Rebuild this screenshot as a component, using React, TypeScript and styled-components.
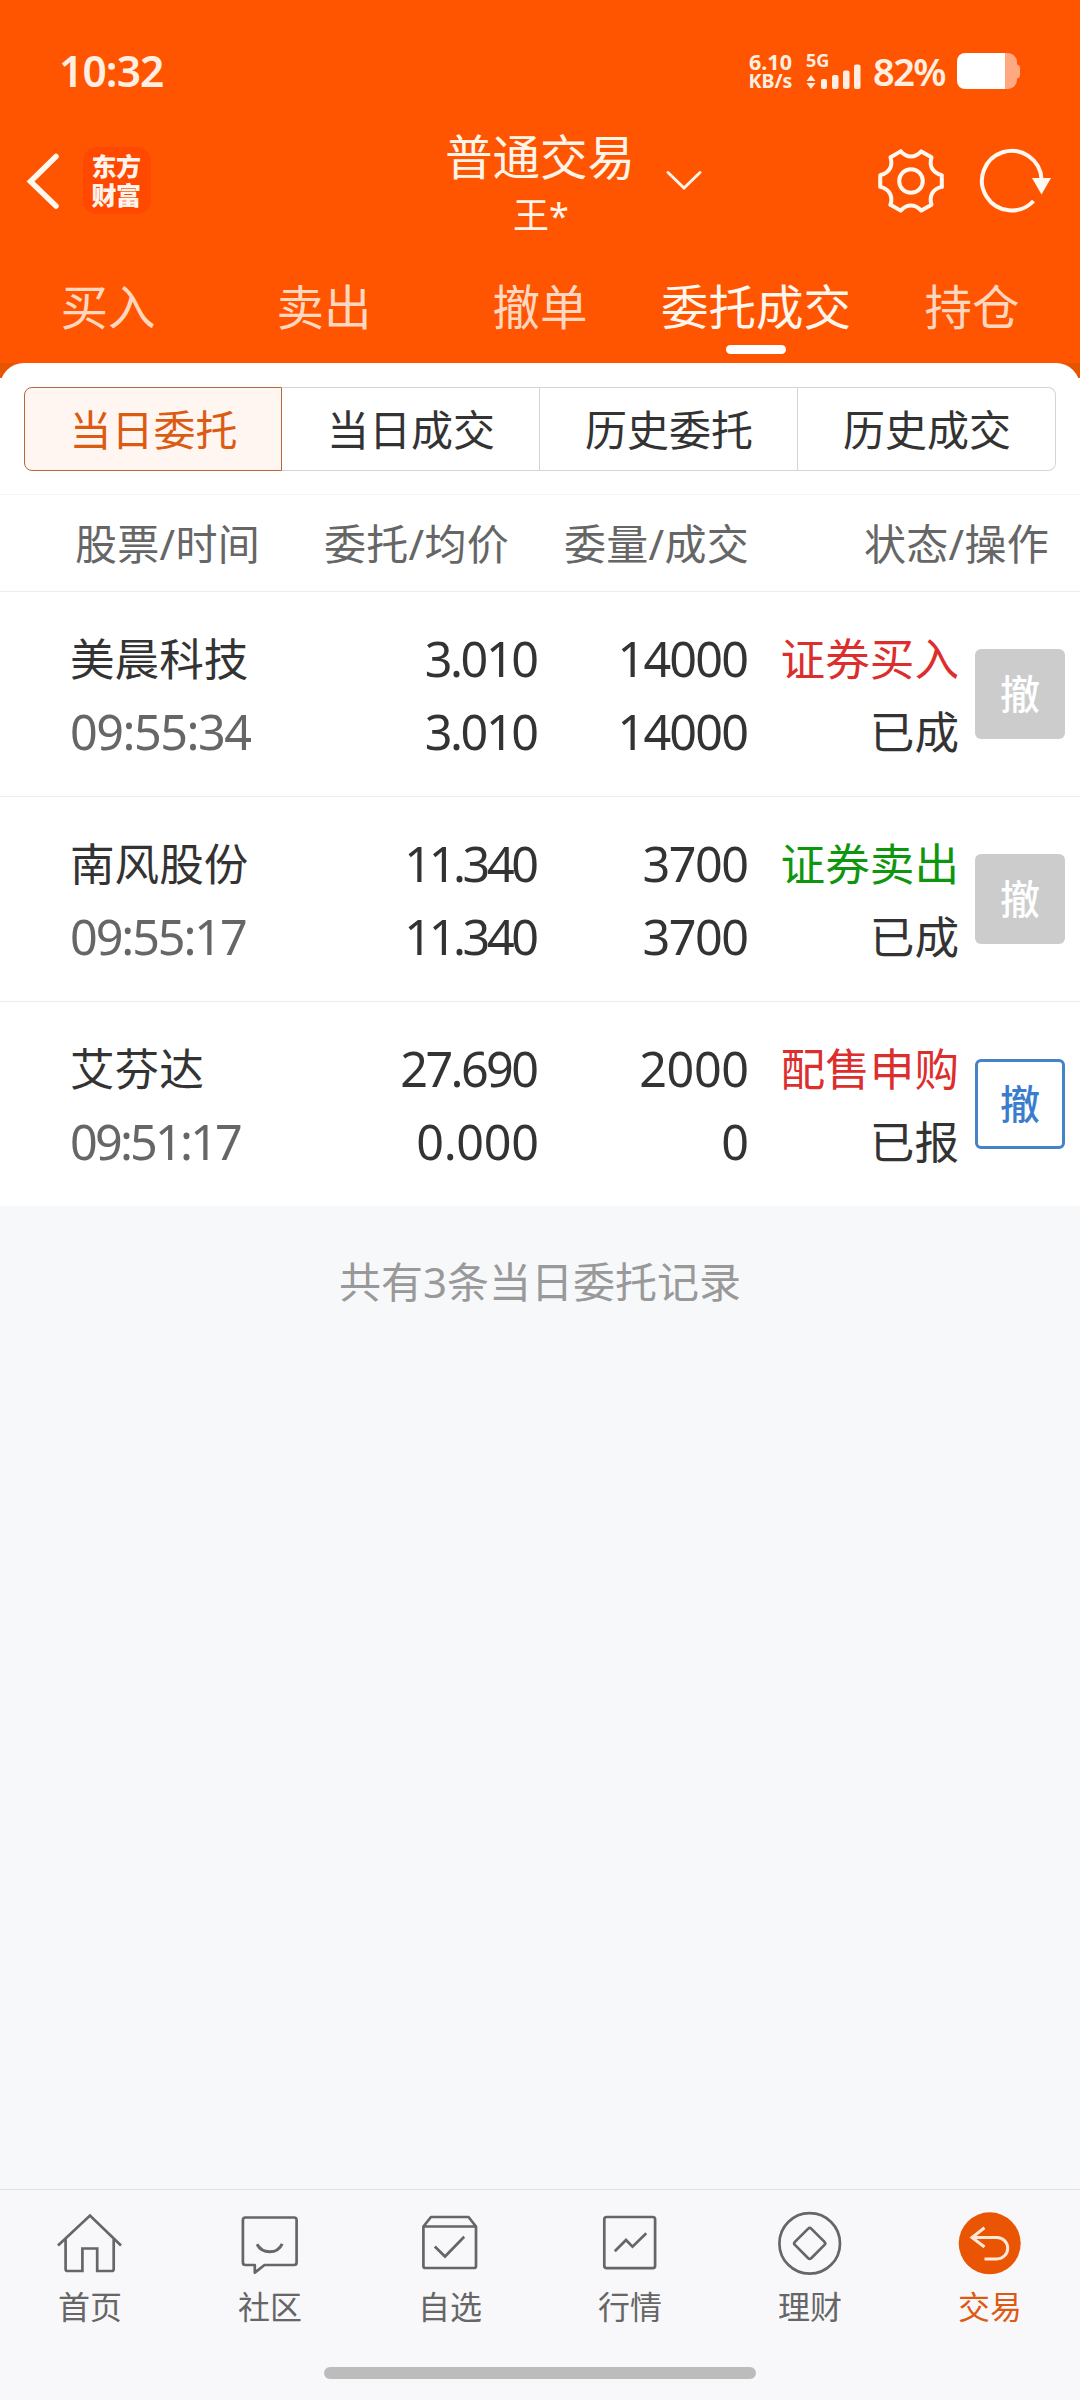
import React from "react";
import styled, { createGlobalStyle } from "styled-components";

const GlobalStyle = createGlobalStyle`
  * { box-sizing: border-box; }
  body {
    margin: 0;
    background: #f7f8fa;
    font-family: "Noto Sans", "Noto Sans CJK SC", sans-serif;
    color: #333;
  }
`;

const Screen = styled.div`
  width: 1080px;
  height: 2400px;
  display: flex;
  flex-direction: column;
  background: #f7f8fa;
  overflow: hidden;
`;

const Header = styled.header`
  height: 363px;
  flex: none;
  background: #ff5500;
  color: #fff4e9;
`;

const StatusBar = styled.div`
  height: 118px;
  padding: 22px 60px 0 59px;
  display: flex;
  justify-content: space-between;
  align-items: flex-start;
  color: #ffeee2;
`;

const Clock = styled.div`
  font-size: 42.5px;
  font-weight: 600;
  line-height: 97px;
  letter-spacing: -0.9px;
`;

const StatusRight = styled.div`
  display: flex;
  height: 98px;
  align-items: center;
`;

const NetSpeed = styled.div`
  width: 47px;
  margin-right: 12px;
  text-align: center;
  font-weight: 700;
  font-size: 19.5px;
  line-height: 20px;
  white-space: nowrap;
`;

const SpeedValue = styled.div`
  font-size: 21.5px;
  line-height: 19px;
`;

const Signal = styled.div`
  width: 58px;
  height: 36px;
  margin-right: 9px;
  display: flex;
  flex-direction: column;
  justify-content: space-between;
  position: relative;
`;

const NetType = styled.span`
  font-size: 18px;
  font-weight: 700;
  line-height: 14px;
`;

const SignalArt = styled.svg`
  position: absolute;
  left: 0;
  top: 0;
`;

const BatteryText = styled.div`
  font-size: 38px;
  font-weight: 600;
  width: 84px;
  letter-spacing: -1.6px;
  line-height: 96px;
`;

const TitleBar = styled.div`
  height: 132px;
  display: grid;
  grid-template-columns: 1fr 260px 1fr;
`;

const TitleLeft = styled.div`
  display: flex;
  align-items: flex-start;
  padding: 29px 0 0 26px;
`;

const Logo = styled.div`
  width: 68px;
  height: 67px;
  margin-left: 22px;
  border-radius: 14px;
  background: #ff4800;
  color: #fff4ec;
  font-family: "Noto Sans CJK SC", sans-serif;
  font-size: 25px;
  font-weight: 900;
  line-height: 29px;
  padding: 4px 2px 0 0;
  text-align: center;
  letter-spacing: -0.5px;
`;

const TitleCenter = styled.div`
  text-align: center;
`;

const Title = styled.div`
  font-size: 47.5px;
  line-height: 60px;
  margin-top: 9px;
`;

const Account = styled.div`
  font-size: 36px;
  line-height: 44px;
  margin-top: 7px;
  padding-left: 2px;
`;

const TitleRight = styled.div`
  display: flex;
  padding: 24px 25px 0 0;
`;

const ArrowDown = styled.svg`
  margin: 26px auto 0 -6px;
`;

const Tabs = styled.nav`
  height: 113px;
  display: grid;
  grid-template-columns: repeat(5, 216px);
`;

const Tab = styled.div<{ $active?: boolean }>`
  display: flex;
  flex-direction: column;
  align-items: center;
  font-size: 47.5px;
  line-height: 70px;
  padding-top: 22px;
  color: ${(p) => (p.$active ? "#fff6ee" : "#ffd6bf")};

  &::after {
    content: "";
    width: 60px;
    height: 9px;
    margin-top: 3px;
    border-radius: 5px;
    background: ${(p) => (p.$active ? "#fff" : "transparent")};
  }
`;

const SheetBack = styled.div`
  flex: none;
  background: linear-gradient(#e65400 0 15px, #fff 15px);
`;

const Sheet = styled.main`
  background: #fff;
  border-radius: 24px 24px 0 0;
  padding-top: 24px;
`;

const Segments = styled.div`
  display: grid;
  grid-template-columns: repeat(4, 258px);
  padding: 0 24px 23px;
  border-bottom: 1px solid #f4f4f4;
`;

const Segment = styled.div<{ $active?: boolean }>`
  height: 84px;
  line-height: 84px;
  padding-left: 1px;
  text-align: center;
  font-size: 42px;
  color: ${(p) => (p.$active ? "#dc5b12" : "#333")};
  background: ${(p) => (p.$active ? "#fff6f2" : "#fff")};
  border: 1px solid ${(p) => (p.$active ? "#b5683c" : "#d4d4d4")};
  &:not(:first-child) { border-left-width: 0; }
  &:first-child { border-radius: 8px 0 0 8px; }
  &:last-child { border-radius: 0 8px 8px 0; }
`;

const TableHead = styled.div`
  height: 97px;
  display: grid;
  grid-template-columns: 260px 249px 240px 1fr;
  padding-right: 31px;
  border-bottom: 1px solid #ececec;
  font-size: 42px;
  line-height: 97px;
  letter-spacing: 0.3px;
  text-align: right;
  color: #666;
  white-space: nowrap;
`;

const Row = styled.div`
  height: 205px;
  display: grid;
  grid-template-columns: 259px 281px 210px 209px 1fr;
  border-bottom: 1px solid #ececec;
  &:last-child { height: 204px; border-bottom: 0; }
`;

const Cell = styled.div<{ $left?: boolean }>`
  padding: ${(p) => (p.$left ? "30px 0 0 70px" : "30px 0 0")};
  text-align: ${(p) => (p.$left ? "left" : "right")};
  white-space: nowrap;
`;

const Line = styled.div<{ $color?: string }>`
  font-size: 44.6px;
  line-height: 73px;
  color: ${(p) => p.$color ?? "#333"};
`;

/* The padding takes back the tracking that trails the last digit. */
const NumLine = styled(Line)<{ $spacing: number }>`
  font-size: 48.5px;
  letter-spacing: ${(p) => p.$spacing}px;
  padding-right: ${(p) => 1 - p.$spacing}px;
`;

const CancelButton = styled.button<{ $enabled?: boolean }>`
  width: 90px;
  height: 90px;
  margin: 57px 0 0 16px;
  padding: 0;
  border-radius: 6px;
  border: ${(p) => (p.$enabled ? "3px solid #4583c8" : "0")};
  background: ${(p) => (p.$enabled ? "#fff" : "#ccc")};
  color: ${(p) => (p.$enabled ? "#3a7dcc" : "#fff")};
  font-family: inherit;
  font-size: 40px;
  font-weight: 500;
  line-height: 84px;
`;

const Summary = styled.div`
  flex: 1;
  padding-top: 46px;
  text-align: center;
  font-size: 42px;
  line-height: 60px;
  color: #999;
`;

const BottomNav = styled.nav`
  height: 211px;
  flex: none;
  background: #f8f8fa;
  border-top: 1px solid #dfe2e5;
`;

const NavItems = styled.div`
  display: grid;
  grid-template-columns: repeat(6, 180px);
  height: 177px;
`;

const NavItem = styled.div<{ $active?: boolean }>`
  display: flex;
  flex-direction: column;
  align-items: center;
  padding-top: 18px;
  font-size: 32px;
  line-height: 48px;
  color: ${(p) => (p.$active ? "#dd5a14" : "#666")};

  svg {
    display: block;
    margin-bottom: 3px;
  }
`;

const HomeBar = styled.div`
  width: 432px;
  height: 12px;
  margin: 0 auto;
  border-radius: 6px;
  background: #bcbcbc;
`;

const tracking: Record<string, number> = {
  "3.010": -2.4,
  "11.340": -3.4,
  "27.690": -2.6,
  "0.000": -0.3,
  "14000": -1.8,
  "3700": -1.5,
  "2000": -0.4,
  "09:55:34": -1.5,
  "09:55:17": -2.1,
  "09:51:17": -2.8,
};

const Num = ({ value, color }: { value: string; color?: string }) => (
  <NumLine $color={color} $spacing={tracking[value] ?? 0}>
    {value}
  </NumLine>
);

const orders = [
  { name: "美晨科技", time: "09:55:34", price: "3.010", avg: "3.010", qty: "14000", done: "14000", side: "证券买入", color: "#dc2e2c", state: "已成", open: false },
  { name: "南风股份", time: "09:55:17", price: "11.340", avg: "11.340", qty: "3700", done: "3700", side: "证券卖出", color: "#0f960f", state: "已成", open: false },
  { name: "艾芬达", time: "09:51:17", price: "27.690", avg: "0.000", qty: "2000", done: "0", side: "配售申购", color: "#dc2e2c", state: "已报", open: true },
];

const NavIcon = ({ children }: { children: React.ReactNode }) => (
  <svg width="72" height="72" viewBox="0 0 72 72" fill="none" stroke="#666" strokeWidth="2.7" strokeLinejoin="round">
    {children}
  </svg>
);

const navItems = [
  { label: "首页", icon: <NavIcon><path d="M4 37.5 36 7.5 67 37.5M11.6 31V61Q11.6 63 13.6 63H28.4V40.5H43.2V63H57.7Q59.7 63 59.7 61V31" strokeLinejoin="miter" /></NavIcon> },
  { label: "社区", icon: <NavIcon><path d="M11.5 9.5H60Q62.6 9.5 62.6 12V54.5Q62.6 57 60 57H30.5L20.8 64.6V57H11.5Q8.9 57 8.9 54.5V12Q8.9 9.5 11.5 9.5Z" /><path d="M23 36.3Q27 43.8 35.7 43.8T48.2 35.8" strokeWidth="3" /></NavIcon> },
  { label: "自选", icon: <NavIcon><path d="M9.4 18.5 17 9H54.5L62 18.5V58Q62 60 60 60H11.4Q9.4 60 9.4 58ZM9.4 18.5H62" /><path d="M20.8 38.5 31 48.5 50.2 28.8" strokeLinejoin="miter" /></NavIcon> },
  { label: "行情", icon: <NavIcon><rect x="10.3" y="9" width="50.8" height="51.2" rx="2.4" /><path d="M20.8 43.3 32 32 38.5 38.6 52.3 25.2" strokeLinejoin="miter" /></NavIcon> },
  { label: "理财", icon: <NavIcon><circle cx="35.7" cy="35.4" r="30.3" /><path d="M34.2 20.6Q35.7 19 37.2 20.6L50.5 33.9Q52 35.4 50.5 36.9L37.2 50.2Q35.7 51.8 34.2 50.2L20.9 36.9Q19.4 35.4 20.9 33.9Z" /></NavIcon> },
  { label: "交易", active: true, icon: <NavIcon><circle cx="35.7" cy="35.3" r="31" fill="#ea5504" stroke="none" /><path d="M27 19.8 14.500 29.500 27 39M15 29.500H39.500A10.700 10.700 0 0 1 39.500 50.900H27" transform="translate(3.500 0)" stroke="#ffe8d8" strokeWidth="3" strokeLinejoin="miter" /></NavIcon> },
];

const gearEdge = "M-10.3-29.6C-4-22.8 4-22.8 10.3-29.6L20.5-23.7C17.8-14.8 21.8-7.9 30.8-5.9";

export default function App() {
  return (
    <Screen>
      <GlobalStyle />
      <Header>
        <StatusBar>
          <Clock>10:32</Clock>
          <StatusRight>
            <NetSpeed>
              <SpeedValue>6.10</SpeedValue>
              <div>KB/s</div>
            </NetSpeed>
            <Signal>
              <NetType>5G</NetType>
              <SignalArt width="58" height="36" viewBox="0 0 58 36" fill="#ffeee2">
                <path d="M0.5 28 5 22 9.5 28ZM0.5 30 5 36 9.5 30Z" />
                <rect x="15" y="26" width="6" height="10" rx="2" />
                <rect x="26" y="22" width="6.5" height="14" rx="2" />
                <rect x="37" y="17.5" width="6.5" height="18.5" rx="2" />
                <rect x="48" y="11.5" width="6.5" height="24.5" rx="2" />
              </SignalArt>
            </Signal>
            <BatteryText>82%</BatteryText>
            <svg width="63" height="36" viewBox="0 0 63 36">
              <rect width="60" height="36" rx="9" fill="#ffa982" />
              <path d="M60 11.5Q63 12 63 15V22Q63 25 60 25.5Z" fill="#ffa982" />
              <path d="M9 0H48V36H9Q0 36 0 27V9Q0 0 9 0Z" fill="#fff" />
            </svg>
          </StatusRight>
        </StatusBar>
        <TitleBar>
          <TitleLeft>
            <svg width="35" height="67" viewBox="0 0 35 67" fill="none">
              <path d="M30 9.5 4.5 34.5 30 59" stroke="#fff8f0" strokeWidth="5.5" strokeLinecap="round" />
            </svg>
            <Logo>东方<br />财富</Logo>
          </TitleLeft>
          <TitleCenter>
            <Title>普通交易</Title>
            <Account>王*</Account>
          </TitleCenter>
          <TitleRight>
            <ArrowDown width="40" height="24" viewBox="0 0 40 24" fill="none">
              <path d="M4 4.5 20 20 36 4.5" stroke="#fff4e9" strokeWidth="3" strokeLinecap="round" />
            </ArrowDown>
            <svg width="78" height="78" viewBox="-38 -39 78 78" fill="none" stroke="#fff8f0" strokeWidth="4" strokeLinejoin="round">
              {[0, 120, 240].map((a) => (
                <path key={a} d={`${gearEdge}L30.8 5.9`} strokeLinecap="round" transform={`rotate(${a})`} />
              ))}
              <circle r="11.8" />
            </svg>
            <svg width="104" height="78" viewBox="0 0 104 78" fill="none">
              <path d="M90.5 37A29.8 29.8 0 1 0 82.5 59" stroke="#fff8f0" strokeWidth="4" />
              <path d="M81 36H100L90.5 52.5Z" fill="#fff8f0" />
            </svg>
          </TitleRight>
        </TitleBar>
        <Tabs>
          <Tab>买入</Tab>
          <Tab>卖出</Tab>
          <Tab>撤单</Tab>
          <Tab $active>委托成交</Tab>
          <Tab>持仓</Tab>
        </Tabs>
      </Header>
      <SheetBack>
        <Sheet>
          <Segments>
            <Segment $active>当日委托</Segment>
            <Segment>当日成交</Segment>
            <Segment>历史委托</Segment>
            <Segment>历史成交</Segment>
          </Segments>
          <TableHead>
            <div>股票/时间</div>
            <div>委托/均价</div>
            <div>委量/成交</div>
            <div>状态/操作</div>
          </TableHead>
          <div>
            {orders.map((o) => (
              <Row key={o.name}>
                <Cell $left>
                  <Line>{o.name}</Line>
                  <Num value={o.time} color="#666" />
                </Cell>
                <Cell>
                  <Num value={o.price} />
                  <Num value={o.avg} />
                </Cell>
                <Cell>
                  <Num value={o.qty} />
                  <Num value={o.done} />
                </Cell>
                <Cell>
                  <Line $color={o.color}>{o.side}</Line>
                  <Line>{o.state}</Line>
                </Cell>
                <CancelButton $enabled={o.open}>撤</CancelButton>
              </Row>
            ))}
          </div>
        </Sheet>
      </SheetBack>
      <Summary>共有3条当日委托记录</Summary>
      <BottomNav>
        <NavItems>
          {navItems.map((n) => (
            <NavItem key={n.label} $active={n.active}>
              {n.icon}
              {n.label}
            </NavItem>
          ))}
        </NavItems>
        <HomeBar />
      </BottomNav>
    </Screen>
  );
}
